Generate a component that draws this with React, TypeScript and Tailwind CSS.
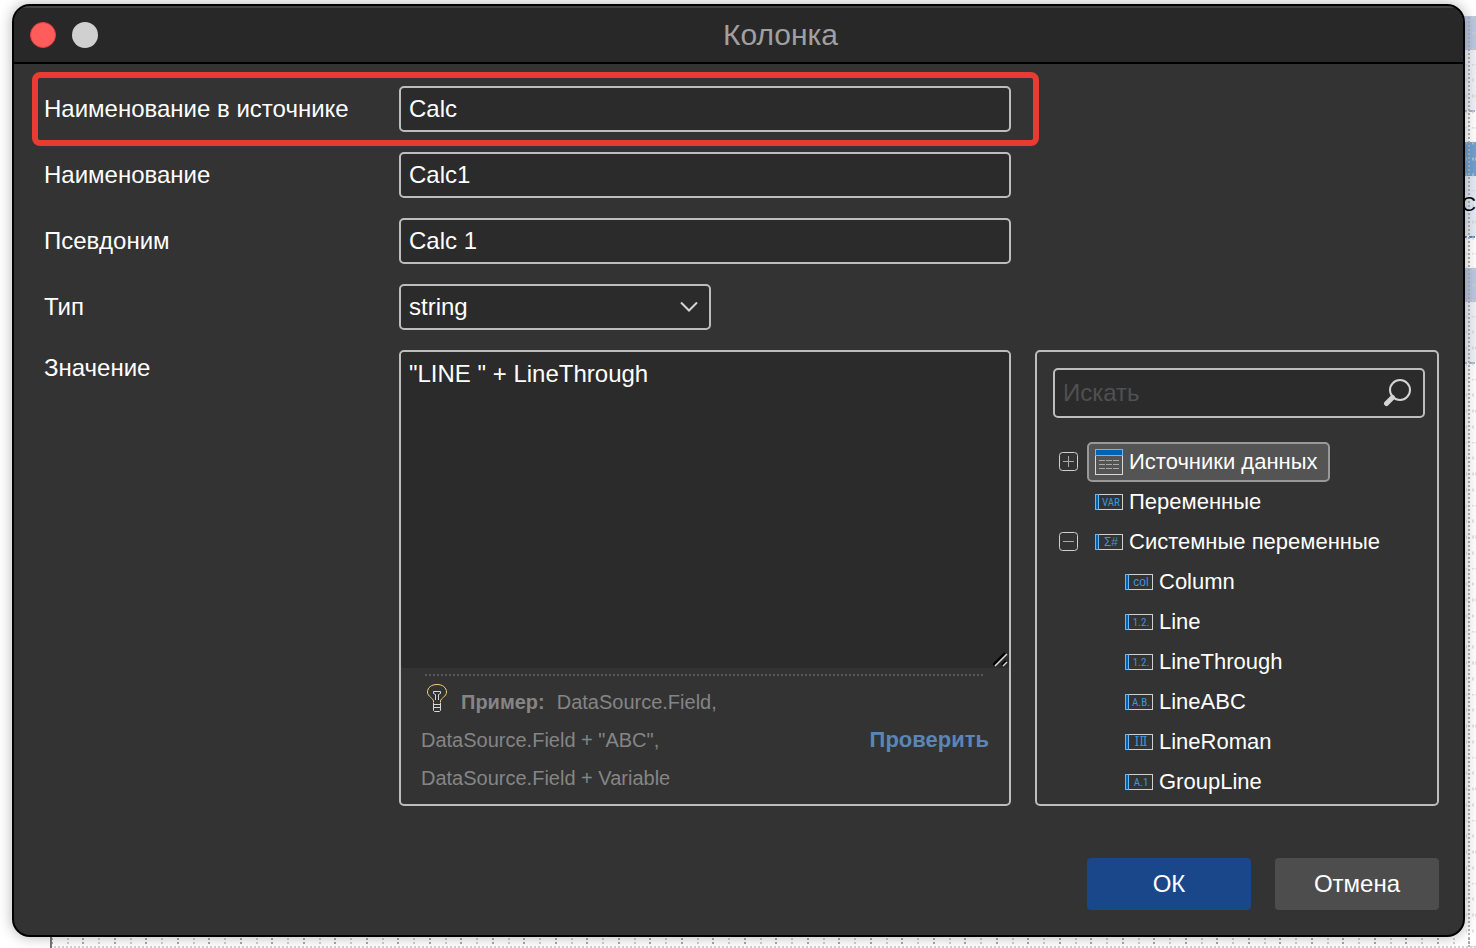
import React from 'react';

const fieldClass =
  'h-[46px] w-full rounded-[5px] border-2 border-[#bdbdbd] bg-[#2b2b2b] px-2 text-2xl text-white outline-none';

const systemVariables = [
  { name: 'Column', badge: 'col', wide: true },
  { name: 'Line', badge: '1.2.' },
  { name: 'LineThrough', badge: '1.2.' },
  { name: 'LineABC', badge: 'A.B.' },
  { name: 'LineRoman', badge: 'ⅠⅡ', wide: true },
  { name: 'GroupLine', badge: 'A.1' },
];

function BadgeIcon({ label, wide = false }: { label: string; wide?: boolean }) {
  return (
    <svg width="28" height="16" viewBox="0 0 28 16" className="shrink-0" aria-hidden="true">
      <rect x="0.5" y="0.5" width="27" height="15" fill="none" stroke="#d0d0d0" />
      <rect x="0.5" y="0.5" width="3" height="15" fill="#0063b1" stroke="#70b4ec" />
      <text
        x="16"
        y="12"
        textAnchor="middle"
        fontFamily={wide ? "'Liberation Sans', 'DejaVu Serif', sans-serif" : "'Liberation Sans Narrow', 'Roboto Condensed', Roboto, sans-serif"}
        fontSize={wide ? 12 : 11}
        fill="#3a96dd"
      >
        {label}
      </text>
    </svg>
  );
}

function TableIcon() {
  return (
    <svg width="28" height="26" viewBox="0 0 28 26" className="shrink-0" aria-hidden="true">
      <rect x="0.5" y="0.5" width="27" height="25" fill="none" stroke="#d8d8d8" />
      <rect x="0.5" y="0.5" width="27" height="6" fill="#0063b1" stroke="#70b4ec" />
      <path
        d="M4 11.5h6M11 11.5h6M18 11.5h6M4 15.5h6M11 15.5h6M18 15.5h6M4 19.5h6M11 19.5h6M18 19.5h6"
        stroke="#a8a8a8"
      />
    </svg>
  );
}

function Expander({ open, label }: { open: boolean; label: string }) {
  return (
    <button type="button" aria-label={label} aria-expanded={open} className="mr-2 shrink-0">
      <svg width="20" height="20" viewBox="0 0 20 20" fill="none">
        <rect x="0.5" y="0.5" width="18" height="18" rx="3" stroke="#cfcfcf" />
        <path d={open ? 'M4 9.5h11' : 'M4 9.5h11M9.5 4v11'} stroke="#a8a8a8" />
      </svg>
    </button>
  );
}

/* Report page that stays visible around the edges of the window */
function ReportCanvas() {
  return (
    <div className="absolute inset-0" aria-hidden="true">
      <svg className="absolute top-0 right-0 h-full w-3" fill="none">
        <rect y="16" width="12" height="34" fill="#b9c7e2" />
        <rect y="50" width="12" height="60" fill="#f0f1f7" />
        <rect y="142" width="12" height="34" fill="#719fcf" />
        <rect y="176" width="12" height="60" fill="#e4ebf5" />
        <rect y="268" width="12" height="34" fill="#b9c7e2" />
        <rect y="302" width="12" height="60" fill="#f0f1f7" />
        <path d="M0 111h12M0 363h12" stroke="#a3b6da" strokeWidth="2" strokeDasharray="3 2 6 2" />
        <path d="M0 237h12" stroke="#4a86c8" strokeWidth="2" strokeDasharray="3 2 6 2" />
        <pattern id="ticks" y="1" width="12" height="63" patternUnits="userSpaceOnUse">
          <path d="M2 0h1M8 0h2M11 0h1M2 16h1M8 16h2M2 32h1M8 32h2M11 32h1M2 48h1M8 48h2" stroke="#d0d0d0" strokeWidth="3" />
        </pattern>
        <rect y="16" width="12" height="100%" fill="url(#ticks)" fillOpacity="0.6" />
        <line x1="5" y1="17" x2="5" y2="100%" stroke="#b4b4b4" strokeWidth="2" strokeDasharray="2 2" />
      </svg>
      <span className="absolute top-[190px] right-0 text-xl leading-7 text-black">С</span>
      <svg className="absolute bottom-0 left-0 h-3 w-full">
        <pattern id="columns" x="51" width="63" height="4" patternUnits="userSpaceOnUse">
          <path d="M0 3h2M31 3h2" stroke="#a8a8a8" strokeWidth="2" />
          <path d="M16 3h2M47 3h2" stroke="#cfcfcf" strokeWidth="2" />
        </pattern>
        <rect x="51" width="100%" height="9" fill="url(#columns)" />
        <line x1="54" y1="11" x2="100%" y2="11" stroke="#d4d4d4" strokeWidth="2" strokeDasharray="2 2" />
        <rect x="50" width="2" height="12" fill="#777777" />
      </svg>
    </div>
  );
}

function Field({ id, label, value }: { id: string; label: string; value: string }) {
  return (
    <div className="flex items-center">
      <label htmlFor={id} className="w-[355px] shrink-0">{label}</label>
      <input id={id} type="text" defaultValue={value} className={fieldClass} />
    </div>
  );
}

function ValueEditor() {
  return (
    <div className="flex min-w-0 flex-1 flex-col rounded-[5px] border-2 border-[#bdbdbd]">
      <div className="relative flex flex-1">
        <textarea
          id="value"
          defaultValue={'"LINE " + LineThrough'}
          className="min-h-[316px] w-full resize-none rounded-[4px] bg-[#2b2b2b] px-2 py-1.5 leading-8 outline-none"
        />
        <svg width="16" height="16" viewBox="0 0 16 16" className="absolute right-0 bottom-0" aria-hidden="true">
          <path d="M0 13L12 1M9 13L13 9" stroke="#000000" strokeWidth="2" />
          <path d="M2 14L14 2M10 14L14 10" stroke="#d6d6d6" strokeWidth="1.5" />
        </svg>
      </div>
      <svg className="mx-6 mt-1.5 h-0.5" aria-hidden="true">
        <line x1="0" y1="1" x2="100%" y2="1" stroke="#575757" strokeWidth="2" strokeDasharray="2 2" />
      </svg>
      <div className="flex items-center justify-between px-5 py-[7px] text-xl text-[#858585]">
        <p className="leading-[38px]">
          <svg width="20" height="28" viewBox="0 0 20 28" fill="none" className="-mt-1 mr-3.5 mb-2 ml-1.5 inline-block" aria-hidden="true">
            <path
              d="M6.5 18.5V17C6.5 14.5 0.5 12.5 0.5 8C0.5 3.5 4.500 0.5 10 0.5S19.500 3.500 19.500 8C19.500 12.500 13.500 14.500 13.500 17V18.500"
              stroke="#f0d078"
            />
            <path d="M8.5 16V10.500L6.500 9.500V7.500H13.500V9.500L11.500 10.500V16" stroke="#d8d8d8" />
            <path d="M6.500 19V26.500L7.500 27.500H12.500L13.500 26.500V19M6.500 20.500H13.500M6.500 23.500H13.500" stroke="#d8d8d8" />
          </svg>
          <b>Пример:</b>
          <span className="ml-3">DataSource.Field,</span>
          <br />
          DataSource.Field + "ABC",
          <br />
          DataSource.Field + Variable
        </p>
        <button type="button" className="text-[22px] font-bold text-[#5a86b5]">Проверить</button>
      </div>
    </div>
  );
}

function DataTree() {
  return (
    <aside className="w-[404px] shrink-0 rounded-[5px] border-2 border-[#bdbdbd] pt-4 pr-3 pl-4">
      <div className="relative">
        <input
          type="search"
          aria-label="Искать"
          placeholder="Искать"
          className="h-[50px] w-full rounded-[5px] border-2 border-[#bdbdbd] bg-[#2b2b2b] px-2 text-2xl outline-none placeholder:text-[#505050]"
        />
        <svg width="30" height="30" viewBox="0 0 30 30" fill="none" className="absolute top-[10px] right-3" aria-hidden="true">
          <circle cx="17" cy="12" r="10" stroke="#d4d4d4" strokeWidth="2" />
          <path d="M9.500 19.500L3.500 25.500" stroke="#d4d4d4" strokeWidth="5" strokeLinecap="round" />
        </svg>
      </div>
      <ul className="mt-6 pl-1.5 text-[22px] leading-10">
        <li className="flex items-center">
          <Expander open={false} label="Источники данных" />
          <button
            type="button"
            className="flex h-10 items-center gap-1.5 rounded-[5px] border-2 border-[#999999] bg-[#545454] pr-2.5 pl-1.5"
          >
            <TableIcon />
            Источники данных
          </button>
        </li>
        <li className="flex items-center gap-1.5 pl-9">
          <BadgeIcon label="VAR" />
          Переменные
        </li>
        <li>
          <div className="flex items-center">
            <Expander open label="Системные переменные" />
            <span className="flex items-center gap-1.5 pl-2">
              <BadgeIcon label="Σ#" wide />
              Системные переменные
            </span>
          </div>
          <ul className="pl-[66px]">
            {systemVariables.map((item) => (
              <li key={item.name} className="flex items-center gap-1.5">
                <BadgeIcon label={item.badge} wide={item.wide} />
                {item.name}
              </li>
            ))}
          </ul>
        </li>
      </ul>
    </aside>
  );
}

export default function App() {
  return (
    <div className="relative min-h-screen bg-white pt-1 pr-[11px] pb-[11px] pl-3 font-['Liberation_Sans',Arial,sans-serif]">
      <ReportCanvas />

      <div
        role="dialog"
        aria-labelledby="title"
        className="relative overflow-hidden rounded-[18px] border-2 border-black bg-[#333333] text-2xl text-white shadow-[0_0_14px_rgba(0,0,0,0.3)]"
      >
        <header className="flex h-[58px] items-center border-t-2 border-b-2 border-t-[#454545] border-b-black bg-[#282828] pl-4">
          <div className="flex gap-4">
            <button type="button" aria-label="Закрыть" className="size-[26px] rounded-full border border-[#e2403f] bg-[#ff5c5c]" />
            <button type="button" aria-label="Свернуть" className="size-[26px] rounded-full bg-[#d0d0d0]" />
          </div>
          <h1 id="title" className="flex-1 text-center text-[30px] text-[#a0a0a0]">Колонка</h1>
        </header>

        <form className="flex flex-col gap-5 pt-[22px] pr-6 pb-[25px] pl-[30px]" onSubmit={(e) => e.preventDefault()}>
          <div className="mr-[428px] flex flex-col gap-5">
            <div className="relative">
              <Field id="source-name" label="Наименование в источнике" value="Calc" />
              <div className="pointer-events-none absolute -top-3.5 -right-7 -bottom-3.5 -left-3 rounded-lg border-6 border-[#e63c32]" />
            </div>
            <Field id="name" label="Наименование" value="Calc1" />
            <Field id="alias" label="Псевдоним" value="Calc 1" />
            <div className="flex items-center">
              <label htmlFor="type" className="w-[355px] shrink-0">Тип</label>
              <div className="relative w-[312px]">
                <select id="type" defaultValue="string" className={`${fieldClass} appearance-none`}>
                  <option>string</option>
                </select>
                <svg width="18" height="12" viewBox="0 0 18 12" fill="none" className="pointer-events-none absolute top-[17px] right-[13px]" aria-hidden="true">
                  <path d="M1 1.500L9 9.500L17 1.500" stroke="#d4d4d4" strokeWidth="2" />
                </svg>
              </div>
            </div>
          </div>

          <div className="flex">
            <label htmlFor="value" className="w-[355px] shrink-0 leading-9">Значение</label>
            <div className="flex min-w-0 flex-1 gap-6">
              <ValueEditor />
              <DataTree />
            </div>
          </div>

          <div className="mt-8 flex justify-end gap-6">
            <button type="submit" className="h-[52px] w-[164px] rounded bg-[#19478a]">ОК</button>
            <button type="button" className="h-[52px] w-[164px] rounded bg-[#4d4d4d]">Отмена</button>
          </div>
        </form>
      </div>
    </div>
  );
}
